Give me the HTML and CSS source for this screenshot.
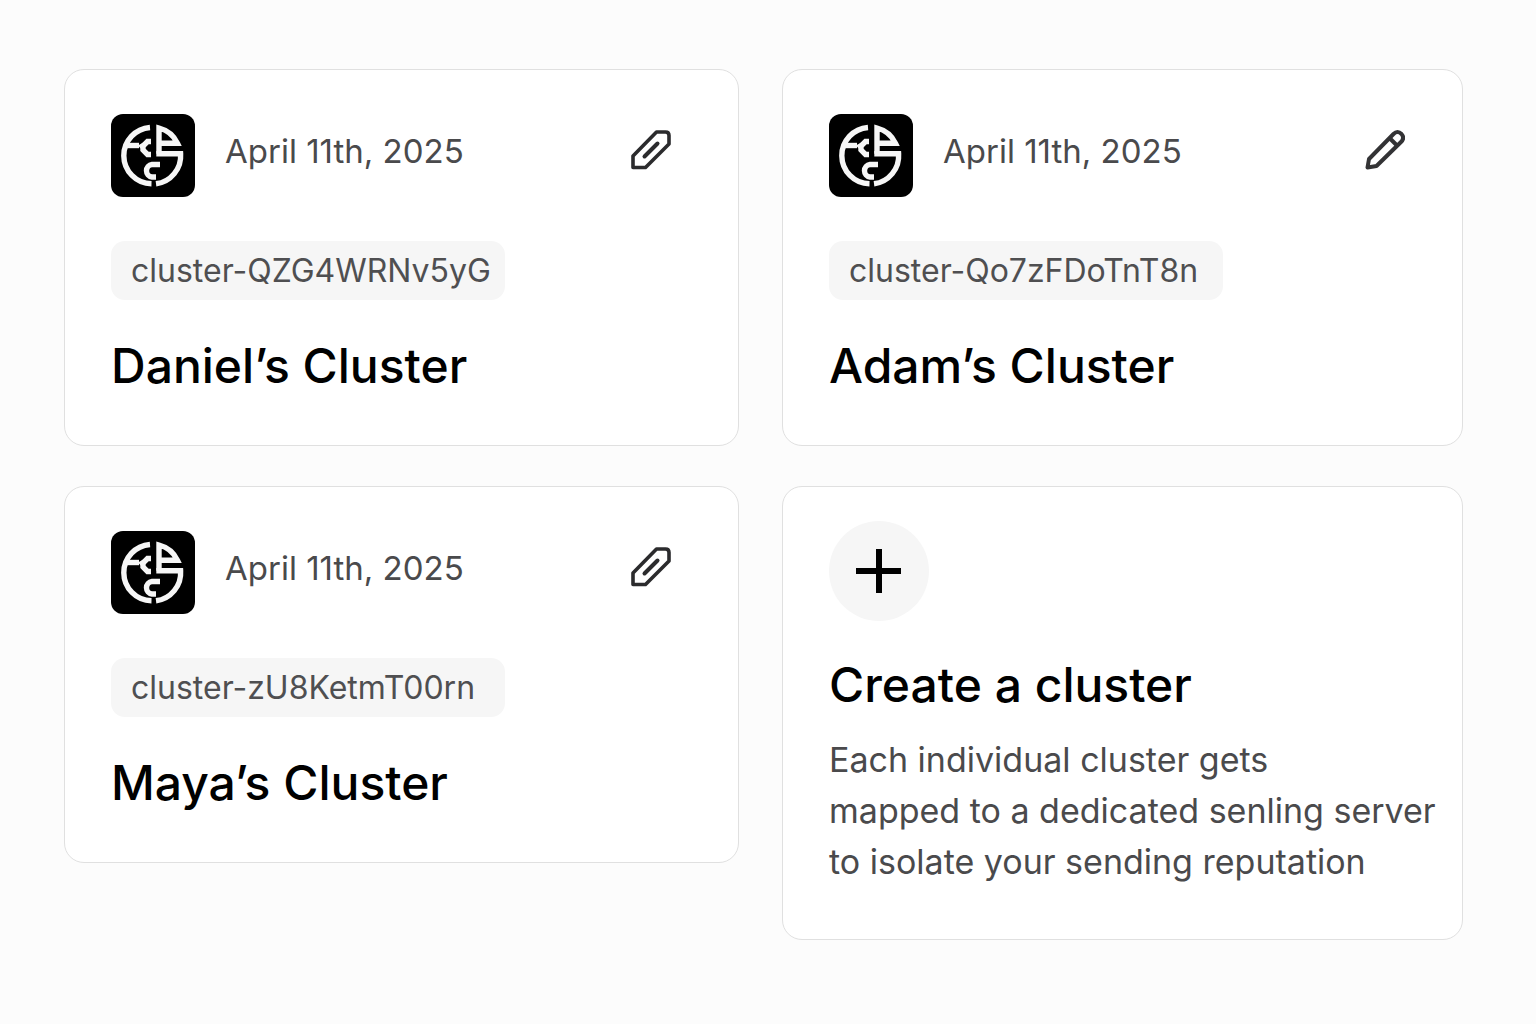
FILE: index.html
```html
<!DOCTYPE html>
<html lang="en">
<head>
  <meta charset="utf-8">
  <title>Clusters</title>
  <link rel="stylesheet" href="styles.css">
</head>
<body>
  <!-- shared icons -->
  <svg class="sprite" aria-hidden="true">
    <symbol id="logo" viewBox="0 0 84 83">
      <rect width="84" height="83" rx="12" fill="#000"/>
      <g fill="none" stroke="#f6f6f6" stroke-width="5.400">
        <path d="M39 13.500A28.300 28.300 0 0 0 12.800 41.700A28.300 28.300 0 0 0 40.500 69.800"/>
        <path d="M15 31.500H28"/>
        <path d="M40 27.500H36.500L32 32V36L36.500 40.500H40"/>
        <path d="M27 31.500L33 28V38Z" fill="#f6f6f6" stroke="none"/>
        <path d="M48 39.700V14A28.300 28.300 0 0 1 66.500 29.300H48"/>
        <path d="M45.300 39.700H69.600A28.300 28.300 0 0 1 45 69.800"/>
        <path d="M49 50.500H41A6.300 6.300 0 0 0 41 63H45"/>
      </g>
    </symbol>
    <symbol id="clip" viewBox="0 0 40 40">
      <path d="M2 37.500V26L25.500 2H34.500Q38 2 38 5.500V14L14.500 37.500Z" fill="none" stroke="#2b2b2d" stroke-width="3.600" stroke-linejoin="round"/>
      <path d="M13.500 26.500L26.500 13.500" fill="none" stroke="#2b2b2d" stroke-width="4" stroke-linecap="round"/>
    </symbol>
    <symbol id="pencil" viewBox="0 0 40 40">
      <path d="M2.500 37.500L4 29L28.500 4Q32.500 0 36.500 4Q40 8 36 12L11.500 36Z" fill="none" stroke="#333335" stroke-width="4" stroke-linejoin="round"/>
      <path d="M25 8.500L31.500 15" fill="none" stroke="#333335" stroke-width="4"/>
    </symbol>
  </svg>

  <main class="clusters">
    <article class="card">
      <div class="card-head">
        <svg class="logo"><use href="#logo"/></svg>
        <span class="date">April 11th, 2025</span>
        <button class="edit-btn" type="button" aria-label="Edit"><svg><use href="#clip"/></svg></button>
      </div>
      <div class="tag">cluster-QZG4WRNv5yG</div>
      <h2>Daniel’s Cluster</h2>
    </article>

    <article class="card">
      <div class="card-head">
        <svg class="logo"><use href="#logo"/></svg>
        <span class="date">April 11th, 2025</span>
        <button class="edit-btn edit-pencil" type="button" aria-label="Edit"><svg><use href="#pencil"/></svg></button>
      </div>
      <div class="tag">cluster-Qo7zFDoTnT8n</div>
      <h2>Adam’s Cluster</h2>
    </article>

    <article class="card">
      <div class="card-head">
        <svg class="logo"><use href="#logo"/></svg>
        <span class="date">April 11th, 2025</span>
        <button class="edit-btn" type="button" aria-label="Edit"><svg><use href="#clip"/></svg></button>
      </div>
      <div class="tag">cluster-zU8KetmT00rn</div>
      <h2>Maya’s Cluster</h2>
    </article>

    <article class="card create">
      <button class="add-btn" type="button" aria-label="Create a cluster">
        <svg viewBox="0 0 46 46"><path d="M0 23H45M23 1V45" stroke="#000" stroke-width="6"/></svg>
      </button>
      <h2>Create a cluster</h2>
      <p>Each individual cluster gets<br>mapped to a dedicated senling server<br>to isolate your sending reputation</p>
    </article>
  </main>
</body>
</html>
```
FILE: styles.css
```css
* { box-sizing: border-box; }

body {
  margin: 0;
  background: #fcfcfc;
  color: #000;
  font-family: Inter, "Liberation Sans", sans-serif;
}

.sprite {
  display: block;
  width: 0;
  height: 0;
}

.clusters {
  display: grid;
  grid-template-columns: 675fr 681fr;
  gap: 40px 43px;
  align-items: start;
  padding: 69px 73px 69px 64px;
}

.card {
  padding: 44px 46px 49px;
  background: #fff;
  border: 1px solid #e0e0e0;
  border-radius: 20px;
}

.card-head {
  display: flex;
  align-items: center;
}

.logo {
  width: 84px;
  height: 83px;
}

.date {
  margin-left: 30px;
  padding-bottom: 10px;
  font-size: 33px;
  line-height: 40px;
  color: #4a4a4c;
}

.edit-btn {
  display: flex;
  justify-content: center;
  width: 82px;
  margin-left: auto;
  padding: 0 0 11px;
  background: none;
  border: none;
  cursor: pointer;
}
.edit-btn svg {
  width: 40px;
  height: 40px;
}
.edit-pencil { width: 62px; }

.tag {
  width: fit-content;
  min-width: 394px;
  margin-top: 44px;
  padding: 1px 14px 0 20px;
  background: #f6f6f6;
  border-radius: 14px;
  font-size: 32px;
  line-height: 58px;
  color: #4f4f51;
}

h2 {
  margin: 36px 0 0;
  font-size: 48px;
  font-weight: 500;
  line-height: 60px;
}

.create { padding: 34px 20px 52px 46px; }

.add-btn {
  display: flex;
  align-items: center;
  justify-content: center;
  width: 100px;
  height: 100px;
  padding: 0;
  background: #f6f6f6;
  border: none;
  border-radius: 50%;
  cursor: pointer;
}
.add-btn svg {
  width: 46px;
  height: 46px;
}

.create h2 { margin-top: 34px; }

.create p {
  margin: 19px 0 0;
  font-size: 34px;
  line-height: 51px;
  color: #4a4a4c;
}
```
